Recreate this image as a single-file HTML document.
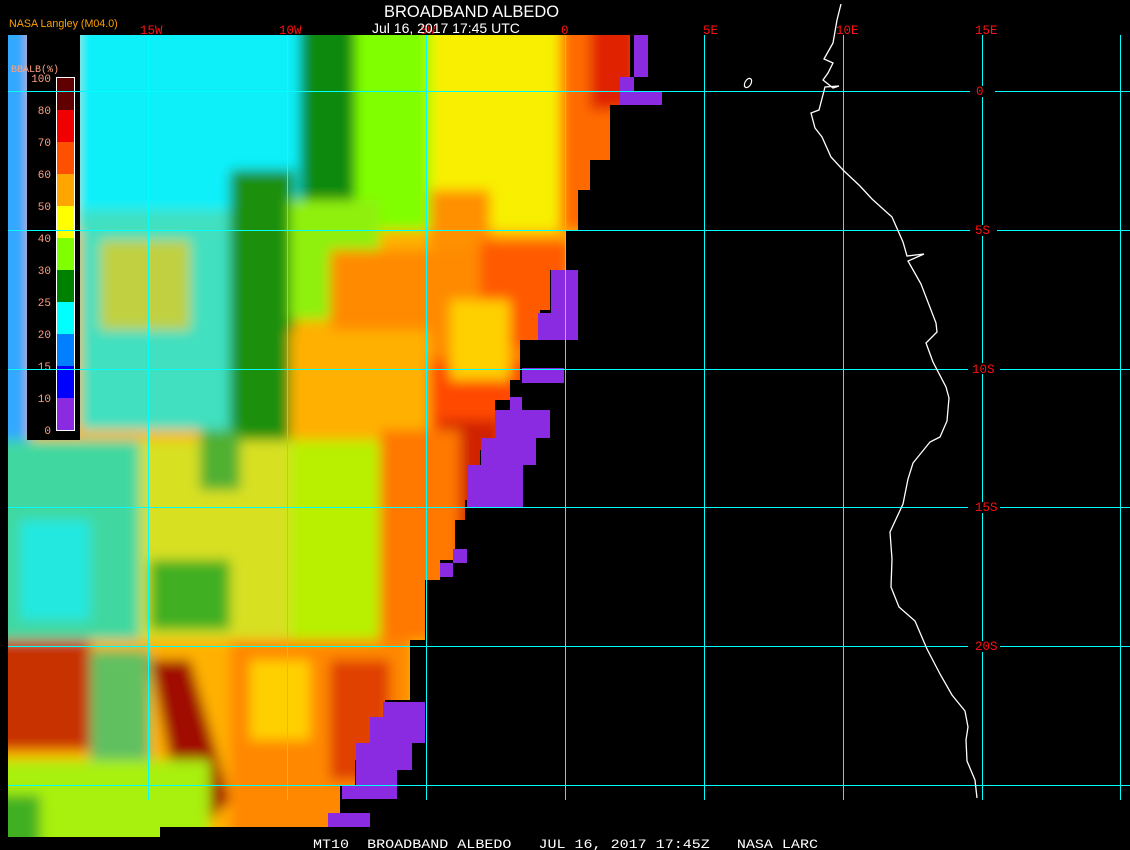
<!DOCTYPE html>
<html><head><meta charset="utf-8"><style>
html,body{margin:0;padding:0;background:#000;}
body{width:1130px;height:850px;overflow:hidden;position:relative;}
svg{position:absolute;left:0;top:0;}
text{font-family:"Liberation Mono","DejaVu Sans Mono",monospace;}
</style></head><body>
<svg width="1130" height="850" viewBox="0 0 1130 850">
<defs>
<clipPath id="dc"><polygon points="8,35 630,35 630,77 620,77 620,105 610,105 610,160 590,160 590,190 578,190 578,230 565,230 565,270 550,270 550,310 540,310 540,340 520,340 520,380 510,380 510,400 495,400 495,450 480,450 480,500 465,500 465,520 455,520 455,560 440,560 440,580 425,580 425,640 410,640 410,700 385,700 385,720 370,720 370,760 355,760 355,785 340,785 340,827 160,827 160,837 8,837"/></clipPath>
<filter id="bl" x="-5%" y="-5%" width="110%" height="110%"><feGaussianBlur stdDeviation="6"/></filter>
</defs>
<g clip-path="url(#dc)">
<g filter="url(#bl)">
<rect x="-40" y="0" width="740" height="880" fill="#ffb000"/>
<rect x="-40" y="0" width="70" height="450" fill="#30a8ff"/>
<rect x="75" y="0" width="225" height="230" fill="#10f0fa"/>
<rect x="80" y="210" width="150" height="220" fill="#40e0c0"/>
<rect x="100" y="240" width="90" height="90" fill="#c0d040"/>
<rect x="300" y="0" width="58" height="200" fill="#0a8a08"/>
<rect x="230" y="170" width="65" height="270" fill="#1a9010"/>
<rect x="355" y="0" width="78" height="230" fill="#80ff00"/>
<rect x="290" y="200" width="90" height="120" fill="#90f010"/>
<rect x="430" y="0" width="130" height="230" fill="#f8f000"/>
<rect x="430" y="190" width="60" height="60" fill="#ff9000"/>
<rect x="560" y="0" width="80" height="230" fill="#ff6a00"/>
<rect x="590" y="0" width="50" height="110" fill="#e02000"/>
<rect x="330" y="250" width="240" height="170" fill="#ff8a00"/>
<rect x="480" y="240" width="90" height="110" fill="#ff5a00"/>
<rect x="430" y="360" width="110" height="160" fill="#ff4a00"/>
<rect x="440" y="420" width="60" height="140" fill="#d02000"/>
<rect x="450" y="300" width="60" height="80" fill="#ffd000"/>
<rect x="290" y="330" width="140" height="120" fill="#ffb000"/>
<rect x="-40" y="440" width="180" height="200" fill="#40d8a0"/>
<rect x="20" y="520" width="70" height="100" fill="#20e8e0"/>
<rect x="140" y="440" width="150" height="200" fill="#d8e020"/>
<rect x="200" y="430" width="40" height="60" fill="#50b030"/>
<rect x="290" y="440" width="100" height="200" fill="#b8f000"/>
<rect x="150" y="560" width="80" height="70" fill="#40b020"/>
<rect x="380" y="430" width="80" height="210" fill="#ff7800"/>
<rect x="-40" y="640" width="130" height="110" fill="#c83000"/>
<rect x="90" y="650" width="60" height="120" fill="#60c060"/>
<polygon points="150,660 190,660 230,800 200,830 170,760" fill="#a01000"/>
<rect x="230" y="640" width="180" height="240" fill="#ff8800"/>
<rect x="250" y="660" width="60" height="80" fill="#ffd000"/>
<rect x="330" y="660" width="60" height="120" fill="#e04000"/>
<rect x="-40" y="760" width="250" height="120" fill="#a8f010"/>
<rect x="-40" y="795" width="80" height="85" fill="#40b020"/>
</g>
</g>
<g fill="#8a2be2">
<rect x="634" y="35" width="14" height="42"/>
<rect x="620" y="77" width="14" height="28"/>
<rect x="634" y="92" width="28" height="13"/>
<rect x="551" y="270" width="27" height="70"/>
<rect x="538" y="313" width="40" height="27"/>
<rect x="522" y="368" width="42" height="15"/>
<rect x="510" y="397" width="12" height="15"/>
<rect x="495" y="410" width="55" height="28"/>
<rect x="481" y="438" width="55" height="27"/>
<rect x="467" y="465" width="56" height="42"/>
<rect x="453" y="549" width="14" height="14"/>
<rect x="440" y="563" width="13" height="14"/>
<rect x="383" y="702" width="42" height="41"/>
<rect x="370" y="717" width="55" height="26"/>
<rect x="356" y="743" width="56" height="27"/>
<rect x="356" y="770" width="41" height="15"/>
<rect x="342" y="785" width="55" height="14"/>
<rect x="328" y="813" width="42" height="14"/>
</g>

<rect x="27" y="35" width="53" height="405" fill="#000"/>
<g>
<rect x="57" y="78" width="17" height="32" fill="#600000"/>
<rect x="57" y="110" width="17" height="32" fill="#f00000"/>
<rect x="57" y="142" width="17" height="32" fill="#ff5000"/>
<rect x="57" y="174" width="17" height="32" fill="#ffa500"/>
<rect x="57" y="206" width="17" height="32" fill="#ffff00"/>
<rect x="57" y="238" width="17" height="32" fill="#80ff00"/>
<rect x="57" y="270" width="17" height="32" fill="#008000"/>
<rect x="57" y="302" width="17" height="32" fill="#00ffff"/>
<rect x="57" y="334" width="17" height="32" fill="#0080ff"/>
<rect x="57" y="366" width="17" height="32" fill="#0000ff"/>
<rect x="57" y="398" width="17" height="32" fill="#8a2be2"/>
<rect x="56.5" y="77.5" width="18" height="353" fill="none" stroke="#fff" stroke-width="1"/>
</g>
<g fill="#ffa080" font-size="11" text-anchor="end">
<text x="51" y="82">100</text>
<text x="51" y="114">80</text>
<text x="51" y="146">70</text>
<text x="51" y="178">60</text>
<text x="51" y="210">50</text>
<text x="51" y="242">40</text>
<text x="51" y="274">30</text>
<text x="51" y="306">25</text>
<text x="51" y="338">20</text>
<text x="51" y="370">15</text>
<text x="51" y="402">10</text>
<text x="51" y="434">0</text>
<text x="11" y="72" text-anchor="start" font-size="10">BBALB(%)</text>
</g>

<g stroke="#00ffff" stroke-width="1" fill="none">
<path d="M148.5 35V800M287.5 35V800M426.5 35V800M565.5 35V800M704.5 35V800M843.5 35V800M982.5 35V86M982.5 97V225M982.5 236V363M982.5 374V502M982.5 513V641M982.5 652V800M1120.5 35V800"/>
<path d="M8 91.5H970M995 91.5H1130M8 230.5H970M997 230.5H1130M8 369.5H968M1000 369.5H1130M8 507.5H968M1000 507.5H1130M8 646.5H968M1000 646.5H1130M8 785.5H1130"/>
</g>
<polyline fill="none" stroke="#fff" stroke-width="1.3" points="841,4 837,20 833,43 824,59 833,63 828,73 823,80 833,88 839,86 825,87 819,110 811,113 815,128 822,137 831,157 843,170 860,186 872,199 892,217 903,242 907,256 924,254 908,261 921,284 936,323 937,332 926,343 933,362 946,387 949,398 947,421 940,437 930,442 913,463 908,479 903,504 890,532 892,559 891,587 899,607 915,621 927,649 940,674 952,695 965,711 968,727 966,740 967,761 975,780 977,798"/>
<ellipse cx="748" cy="83" rx="3" ry="5" fill="none" stroke="#fff" stroke-width="1.2" transform="rotate(30 748 83)"/>

<g fill="#ff1010" font-size="12.5">
<text x="140" y="34">15W</text>
<text x="279" y="34">10W</text>
<text x="420" y="34">5W</text>
<text x="561" y="34">0</text>
<text x="703" y="34">5E</text>
<text x="836" y="34">10E</text>
<text x="975" y="34">15E</text>
<text x="976" y="95">0</text>
<text x="975" y="234">5S</text>
<text x="972" y="373">10S</text>
<text x="975" y="511">15S</text>
<text x="975" y="650">20S</text>
</g>
<text x="9" y="27" fill="#ffa000" font-size="10.7" style="font-family:'Liberation Sans',sans-serif">NASA Langley (M04.0)</text>
<text x="384" y="17" fill="#fff" font-size="16.5" style="font-family:'Liberation Sans',sans-serif">BROADBAND ALBEDO</text>
<text x="372" y="33" fill="#fff" font-size="14" style="font-family:'Liberation Sans',sans-serif">Jul 16, 2017 17:45 UTC</text>
<text x="313" y="848" fill="#fff" font-size="12.5" xml:space="preserve" style="white-space:pre" textLength="505" lengthAdjust="spacingAndGlyphs">MT10  BROADBAND ALBEDO   JUL 16, 2017 17:45Z   NASA LARC</text>
</svg>
</body></html>
